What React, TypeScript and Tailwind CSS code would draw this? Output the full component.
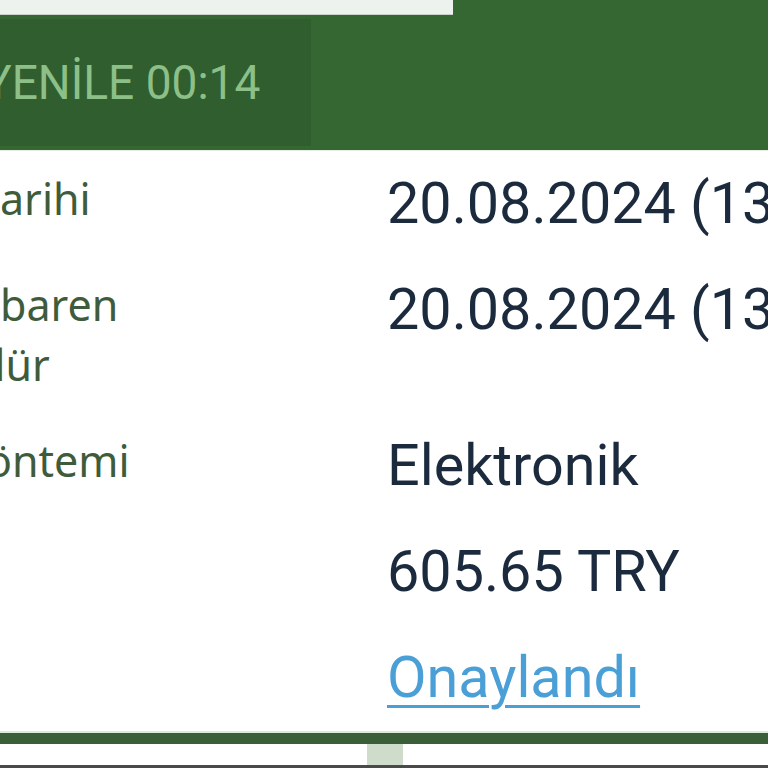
export default function App() {
  const rows = [
    { label: ["arihi"], labelOffset: [0], value: "20.08.2024 (13:42)" },
    { label: ["baren", "dür"], labelOffset: [0, -21], value: "20.08.2024 (13:42)" },
    { label: ["öntemi"], labelOffset: [-14], value: "Elektronik" },
    { label: [""], labelOffset: [0], value: "605.65 TRY" },
    { label: [""], labelOffset: [0], value: "Onaylandı", link: true },
  ];

  return (
    <div className="w-[768px] h-[768px] overflow-hidden bg-white flex flex-col">
      {/* header */}
      <div className="bg-[#356733] h-[150px] flex flex-col shrink-0">
        <div className="h-[15px] flex">
          <div className="w-[453px] bg-[#eef2ee] border-b border-[#c9d2c8]" />
        </div>
        <div className="flex-1 flex py-[4px]">
          <div className="w-[311px] bg-[#305e2f] flex items-center overflow-hidden">
            <span
              className="ml-[-16px] origin-left scale-x-[0.94] whitespace-nowrap text-[49px] leading-none text-[#8cc088]"
              style={{ fontFamily: "Roboto, sans-serif" }}
            >
              YENİLE 00:14
            </span>
          </div>
        </div>
      </div>

      {/* rows */}
      <div className="border-t border-[#e6efe4] flex flex-col h-[581px] overflow-hidden">
        {rows.map((r, i) => (
          <div key={i} className="flex items-start py-[18px]">
            <div
              className="w-[387px] shrink-0 text-[43px] leading-[60px] text-[#3e5c3c]"
              style={{ fontFamily: '"Noto Sans", sans-serif' }}
            >
              {r.label.map((l, j) => (
                <div key={j} className="whitespace-nowrap" style={{ marginLeft: r.labelOffset[j] }}>
                  {l || "\u00a0"}
                </div>
              ))}
            </div>
            <div
              className={
                "whitespace-nowrap text-[57.5px] leading-[70px] " +
                (r.link
                  ? "text-[#4a9fd6] underline decoration-[3px] underline-offset-[8px]"
                  : "text-[#1b2b3d]")
              }
              style={{ fontFamily: "Roboto, sans-serif" }}
            >
              {r.value}
            </div>
          </div>
        ))}
      </div>

      {/* bottom */}
      <div className="h-[2px] bg-[#dcebd8] shrink-0" />
      <div className="h-[11px] bg-[#3a5e37] shrink-0" />
      <div className="flex-1 flex items-stretch bg-white border-b-[3px] border-[#4a4a4a]">
        <div className="ml-[367px] w-[36px] bg-[#cfdccb]" />
      </div>
    </div>
  );
}
